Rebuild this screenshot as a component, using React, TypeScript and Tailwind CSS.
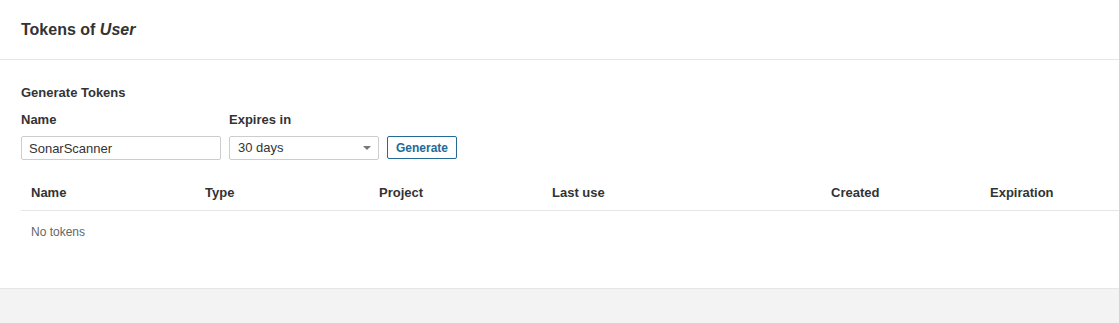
import { ChevronDown } from "lucide-react";

const columns = [
  { label: "Name", width: "w-[174px]" },
  { label: "Type", width: "w-[174px]" },
  { label: "Project", width: "w-[173px]" },
  { label: "Last use", width: "w-[279px]" },
  { label: "Created", width: "w-[159px]" },
  { label: "Expiration", width: "w-[160px]" },
];

export default function App() {
  return (
    <div className="min-h-[323px] w-[1119px] bg-white text-[#333] font-['Liberation_Sans',Arial,sans-serif] overflow-hidden flex flex-col">
      <header className="h-[60px] border-b border-[#e6e6e6] px-[21px] flex items-center">
        <h2 className="text-[16px] font-bold leading-none">
          Tokens of <em className="italic">User</em>
        </h2>
      </header>

      <main className="h-[228px] pt-[26px] px-[21px]">
        <h3 className="text-[13px] font-bold leading-[14px] mb-[13px]">Generate Tokens</h3>

        <form className="flex items-end">
          <div className="flex flex-col mr-[8px]">
            <label className="text-[13px] font-bold leading-[14px] mb-[9px]">Name</label>
            <input
              className="w-[200px] h-[24px] border border-[#cdcdcd] rounded-[2px] px-[7px] text-[13px] text-[#333] outline-none"
              defaultValue="SonarScanner"
            />
          </div>
          <div className="flex flex-col mr-[8px]">
            <label className="text-[13px] font-bold leading-[14px] mb-[9px]">Expires in</label>
            <div className="w-[150px] h-[24px] border border-[#cdcdcd] rounded-[2px] pl-[8px] pr-[6px] flex items-center justify-between text-[13px] bg-white">
              <span>30 days</span>
              <svg width="8" height="4" viewBox="0 0 8 4" className="mr-[1px]">
                <path d="M0 0h8L4 4z" fill="#777" />
              </svg>
            </div>
          </div>
          <button
            type="button"
            className="h-[23px] mb-[1px] px-[8px] border border-[#236a97] rounded-[2px] text-[12px] font-bold text-[#236a97] bg-white"
          >
            Generate
          </button>
        </form>

        <table className="mt-[15px] table-fixed border-collapse w-[1119px] text-[13px]">
          <thead>
            <tr className="border-b border-[#e6e6e6]">
              {columns.map((c) => (
                <th key={c.label} className={`${c.width} h-[35px] px-[10px] text-left font-bold text-[#333]`}>
                  {c.label}
                </th>
              ))}
            </tr>
          </thead>
          <tbody>
            <tr>
              <td colSpan={6} className="h-[44px] px-[10px] text-[12px] text-[#666]">
                No tokens
              </td>
            </tr>
          </tbody>
        </table>
      </main>

      <footer className="flex-1 bg-[#f3f3f3] border-t border-[#e6e6e6]" />
    </div>
  );
}
